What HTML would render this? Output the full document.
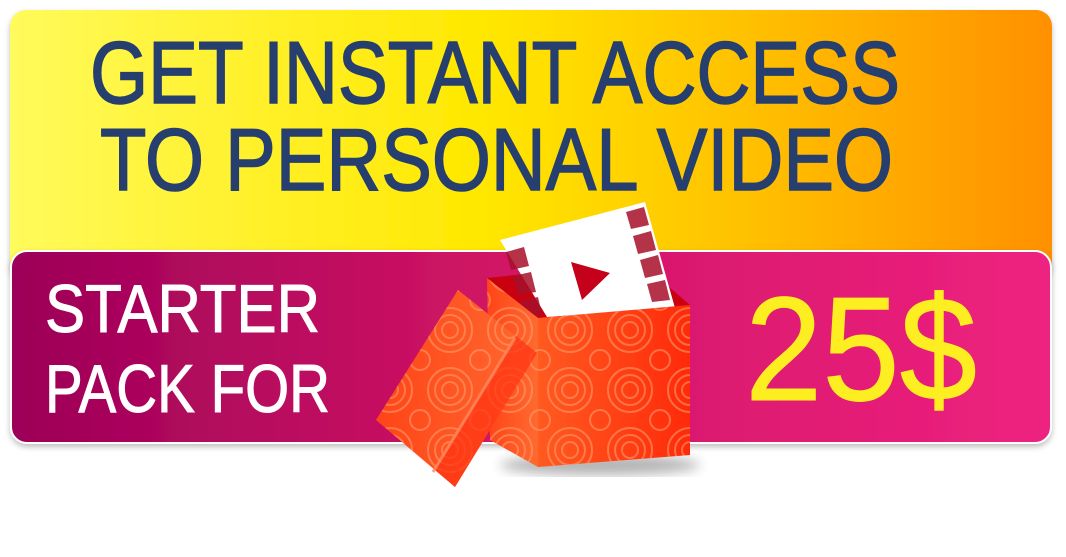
<!DOCTYPE html>
<html><head><meta charset="utf-8"><style>
html,body{margin:0;padding:0;background:#fff;width:1066px;height:557px;overflow:hidden}
svg{display:block}
text{font-family:"Liberation Sans",sans-serif}
</style></head><body>
<svg width="1066" height="557" viewBox="0 0 1066 557">
<defs>
<linearGradient id="gy" x1="0" x2="1" y1="0" y2="0">
<stop offset="0" stop-color="#fffb5c"/><stop offset="0.12" stop-color="#fff542"/><stop offset="0.45" stop-color="#ffe800"/><stop offset="0.75" stop-color="#ffba00"/><stop offset="1" stop-color="#ff9000"/></linearGradient>
<linearGradient id="gm" x1="0" x2="1" y1="0" y2="0">
<stop offset="0" stop-color="#9c0058"/><stop offset="0.45" stop-color="#cf1464"/><stop offset="1" stop-color="#ee2280"/></linearGradient>
<linearGradient id="gb" x1="0" x2="1"><stop offset="0" stop-color="#ff5a20"/><stop offset="1" stop-color="#ff2a0a"/></linearGradient>
<linearGradient id="gs" x1="0" x2="1"><stop offset="0" stop-color="#ff4418"/><stop offset="1" stop-color="#ff6a30"/></linearGradient>
<filter id="sh" x="-5%" y="-5%" width="110%" height="120%"><feDropShadow dx="0" dy="3" stdDeviation="3" flood-color="#000" flood-opacity="0.25"/></filter>
<filter id="blur"><feGaussianBlur stdDeviation="6"/></filter>
<pattern id="rings" width="60" height="60" patternUnits="userSpaceOnUse">
<g fill="none" stroke="#ffa070" stroke-opacity="0.55" stroke-width="2"><circle cx="30" cy="30" r="22"/><circle cx="30" cy="30" r="15"/><circle cx="30" cy="30" r="8"/><circle cx="0" cy="0" r="10"/><circle cx="60" cy="0" r="10"/><circle cx="0" cy="60" r="10"/><circle cx="60" cy="60" r="10"/></g></pattern>
</defs>
<rect x="10" y="10" width="1042" height="270" rx="16" fill="url(#gy)" filter="url(#sh)"/>
<rect x="11" y="251" width="1040" height="192" rx="16" fill="url(#gm)" stroke="#fff" stroke-width="2" filter="url(#sh)"/>
<text x="90" y="103" font-size="88" fill="#263f6e" stroke="#263f6e" stroke-width="1.5" textLength="810" lengthAdjust="spacingAndGlyphs">GET INSTANT ACCESS</text>
<text x="100" y="190" font-size="88" fill="#263f6e" stroke="#263f6e" stroke-width="1.5" textLength="793" lengthAdjust="spacingAndGlyphs">TO PERSONAL VIDEO</text>
<text x="45" y="332" font-size="68" fill="#fff" stroke="#fff" stroke-width="1" textLength="275" lengthAdjust="spacingAndGlyphs">STARTER</text>
<text x="45" y="412" font-size="68" fill="#fff" stroke="#fff" stroke-width="1" textLength="285" lengthAdjust="spacingAndGlyphs">PACK FOR</text>
<text x="745" y="400" font-size="148" fill="#fdee21" stroke="#fdee21" stroke-width="1" textLength="232" lengthAdjust="spacingAndGlyphs">25$</text>
<!-- box shadow -->
<ellipse cx="600" cy="465" rx="100" ry="10" fill="#000" opacity="0.3" filter="url(#blur)"/>
<!-- box interior -->
<polygon points="487,278 640,262 690,305 538,318" fill="#c80010"/>
<!-- film card -->
<g>
<polygon points="500,240 645,202 675,308 547,317" fill="#fff"/>
<g fill="#a8102a" opacity="0.85">
<polygon points="506,252 524,247 529,266 511,270"/>
<polygon points="513,276 531,272 536,292 518,295"/>
<polygon points="520,301 538,297 542,315 524,318"/>
<polygon points="626,212 644,207 649,225 631,229"/>
<polygon points="633,236 651,231 656,250 638,254"/>
<polygon points="640,260 658,255 663,274 645,278"/>
<polygon points="647,284 665,280 670,300 652,302"/>
</g>
<polygon points="571,262 610,273 582,300" fill="#c4001a"/>
</g>
<!-- box left side -->
<polygon points="487,278 538,318 538,467 490,440" fill="url(#gs)"/>
<polygon points="487,278 538,318 538,467 490,440" fill="url(#rings)"/>
<!-- box front -->
<polygon points="538,318 690,305 690,455 538,467" fill="url(#gb)"/>
<polygon points="538,318 690,305 690,455 538,467" fill="url(#rings)"/>
<!-- lid -->
<polygon points="458,290 537,353 455,487 376,420" fill="url(#gs)"/>
<polygon points="458,290 537,353 455,487 376,420" fill="url(#rings)"/>
<polygon points="516,336 537,353 455,487 435,470" fill="#ff3010" opacity="0.7"/>
<line x1="515" y1="338" x2="433" y2="472" stroke="#ff8a60" stroke-width="3" opacity="0.8"/>
</svg>
</body></html>
